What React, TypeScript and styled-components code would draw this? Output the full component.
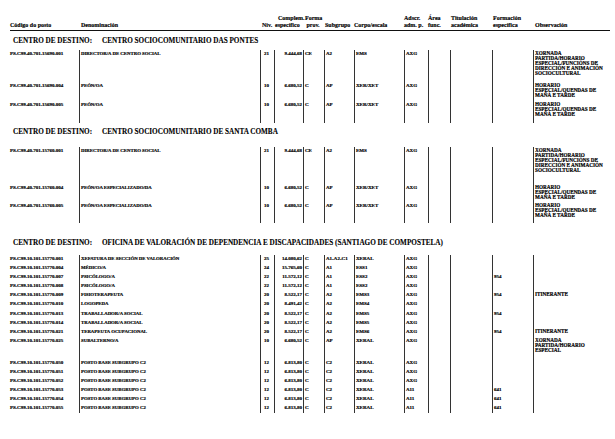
import React from 'react';
import styled, { createGlobalStyle } from 'styled-components';

const Global = createGlobalStyle`
  html, body { margin: 0; padding: 0; background: #ffffff; }
  body {
    width: 615px;
    height: 439px;
    overflow: hidden;
    font-family: "Liberation Serif", "Times New Roman", serif;
    color: #000;
  }
`;

const COLS = '69px 181px 14px 29px 21px 30px 50px 24px 22px 42px 41px 77px';

const Page = styled.div`
  padding: 15px 5px 0 10px;
  width: 600px;
`;

const HeaderRow = styled.div`
  display: grid;
  grid-template-columns: ${COLS};
  align-items: end;
  border-bottom: 1px solid #111;
  padding-bottom: 1px;
  font-size: 6px;
  line-height: 7px;
  font-weight: bold;
  -webkit-text-stroke: 0.15px #000;
`;

const HeadCell = styled.div<{ $pad?: number }>`
  white-space: pre;
  padding-left: ${(p) => p.$pad ?? 1}px;
`;

const Section = styled.section<{ $top: number }>`
  margin-top: ${(p) => p.$top}px;
`;

const Title = styled.h2<{ $gap: number }>`
  margin: 0 0 ${(p) => p.$gap}px 0;
  padding-left: 3px;
  display: flex;
  font-size: 7.2px;
  line-height: 10px;
  height: 10px;
  font-weight: bold;
  white-space: nowrap;
  -webkit-text-stroke: 0.1px #000;
`;

const TitleLabel = styled.span`
  width: 89px;
  flex: none;
`;

const Row = styled.div<{ $h: number }>`
  display: grid;
  grid-template-columns: ${COLS};
  height: ${(p) => p.$h}px;
  font-weight: bold;
  font-size: 5px;
  line-height: 5px;
  -webkit-text-stroke: 0.18px #000;
`;

const Cell = styled.div<{ $line?: boolean; $right?: boolean; $pad?: number }>`
  border-left: ${(p) => (p.$line ? '1px solid #333' : 'none')};
  padding-top: 1px;
  padding-left: ${(p) => p.$pad ?? 1}px;
  padding-right: ${(p) => (p.$right ? 1 : 0)}px;
  text-align: ${(p) => (p.$right ? 'right' : 'left')};
  white-space: pre;
  overflow: visible;
`;

const CodeCell = styled(Cell)`
  padding-left: 0;
`;

const DenCell = styled(Cell)`
  font-size: 4.8px;
`;

const ObsCell = styled(Cell)`
  font-size: 5.2px;
  line-height: 5px;
`;

type RowData = {
  code: string;
  den: string;
  niv: string;
  comp: string;
  forma: string;
  sub: string;
  corpo: string;
  adscr: string;
  form?: string;
  obs?: string;
  h: number;
};

type SectionData = { name: string; top: number; gap: number; rows: RowData[] };

const OBS_DIR = 'XORNADA\nPARTIDA/HORARIO\nESPECIAL/FUNCIÓNS DE\nDIRECCIÓN E ANIMACIÓN\nSOCIOCULTURAL';
const OBS_PEON = 'HORARIO\nESPECIAL/QUENDAS DE\nMAÑÁ E TARDE';

const base = (
  code: string,
  den: string,
  niv: string,
  comp: string,
  sub: string,
  corpo: string,
  h: number,
  extra: Partial<RowData> = {}
): RowData => ({ code, den, niv, comp, forma: 'C', sub, corpo, adscr: 'AXG', h, ...extra });

const P = 9.1;

const sections: SectionData[] = [
  {
    name: 'CENTRO SOCIOCOMUNITARIO DAS PONTES',
    top: 5,
    gap: 4,
    rows: [
      base('PS.C99.40.701.15690.001', 'DIRECTOR/A DE CENTRO SOCIAL', '21', '9.444,68', 'A2', 'EMS', 32, { forma: 'CE', obs: OBS_DIR }),
      base('PS.C99.40.701.15690.004', 'PEÓN/OA', '10', '6.680,52', 'AP', 'XER/XET', 18.5, { obs: OBS_PEON }),
      base('PS.C99.40.701.15690.005', 'PEÓN/OA', '10', '6.680,52', 'AP', 'XER/XET', 22, { obs: OBS_PEON }),
    ],
  },
  {
    name: 'CENTRO SOCIOCOMUNITARIO DE SANTA COMBA',
    top: 4,
    gap: 10,
    rows: [
      base('PS.C99.40.701.15760.001', 'DIRECTOR/A DE CENTRO SOCIAL', '21', '9.444,68', 'A2', 'EMS', 37, { forma: 'CE', obs: OBS_DIR }),
      base('PS.C99.40.701.15760.004', 'PEÓN/OA ESPECIALIZADO/DA', '10', '6.680,52', 'AP', 'XER/XET', 18.5, { obs: OBS_PEON }),
      base('PS.C99.40.701.15760.005', 'PEÓN/OA ESPECIALIZADO/DA', '10', '6.680,52', 'AP', 'XER/XET', 21, { obs: OBS_PEON }),
    ],
  },
  {
    name: 'OFICINA DE VALORACIÓN DE DEPENDENCIA E DISCAPACIDADES (SANTIAGO DE COMPOSTELA)',
    top: 15,
    gap: 7,
    rows: [
      base('PS.C99.10.101.15770.001', 'XEFATURA DE SECCIÓN DE VALORACIÓN', '25', '14.080,62', 'A1-A2-C1', 'XERAL', P),
      base('PS.C99.10.101.15770.004', 'MÉDICO/A', '24', '15.765,60', 'A1', 'ESS1', P),
      base('PS.C99.10.101.15770.007', 'PSICÓLOGO/A', '22', '11.572,12', 'A1', 'ESS2', P, { form: '954' }),
      base('PS.C99.10.101.15770.008', 'PSICÓLOGO/A', '22', '11.572,12', 'A1', 'ESS2', P),
      base('PS.C99.10.101.15770.009', 'FISIOTERAPEUTA', '20', '8.522,17', 'A2', 'EMS3', P, { form: '954', obs: 'ITINERANTE' }),
      base('PS.C99.10.101.15770.010', 'LOGOPEDA', '20', '8.491,42', 'A2', 'EMS4', P),
      base('PS.C99.10.101.15770.013', 'TRABALLADOR/A SOCIAL', '20', '8.522,17', 'A2', 'EMS5', P, { form: '954' }),
      base('PS.C99.10.101.15770.014', 'TRABALLADOR/A SOCIAL', '20', '8.522,17', 'A2', 'EMS5', P),
      base('PS.C99.10.101.15770.021', 'TERAPEUTA OCUPACIONAL', '20', '8.522,17', 'A2', 'EMS6', P, { form: '954', obs: 'ITINERANTE' }),
      base('PS.C99.10.101.15770.025', 'SUBALTERNO/A', '10', '6.680,52', 'AP', 'XERAL', 22, { obs: 'XORNADA\nPARTIDA/HORARIO\nESPECIAL' }),
      base('PS.C99.10.101.15770.050', 'POSTO BASE SUBGRUPO C2', '12', '6.813,80', 'C2', 'XERAL', P),
      base('PS.C99.10.101.15770.051', 'POSTO BASE SUBGRUPO C2', '12', '6.813,80', 'C2', 'XERAL', P),
      base('PS.C99.10.101.15770.052', 'POSTO BASE SUBGRUPO C2', '12', '6.813,80', 'C2', 'XERAL', P),
      base('PS.C99.10.101.15770.053', 'POSTO BASE SUBGRUPO C2', '12', '6.813,80', 'C2', 'XERAL', P, { adscr: 'A11', form: '641' }),
      base('PS.C99.10.101.15770.054', 'POSTO BASE SUBGRUPO C2', '12', '6.813,80', 'C2', 'XERAL', P, { adscr: 'A11', form: '641' }),
      base('PS.C99.10.101.15770.055', 'POSTO BASE SUBGRUPO C2', '12', '6.813,80', 'C2', 'XERAL', P, { adscr: 'A11', form: '641' }),
    ],
  },
];

function DataRow({ r }: { r: RowData }) {
  return (
    <Row $h={r.h}>
      <CodeCell>{r.code}</CodeCell>
      <DenCell $line $pad={1}>{r.den}</DenCell>
      <Cell $line $pad={3}>{r.niv}</Cell>
      <Cell $line $right>{r.comp}</Cell>
      <Cell $line>{r.forma}</Cell>
      <Cell $line>{r.sub}</Cell>
      <Cell $line>{r.corpo}</Cell>
      <Cell $line>{r.adscr}</Cell>
      <Cell $line />
      <Cell $line />
      <Cell $line>{r.form ?? ''}</Cell>
      <ObsCell $line>{r.obs ?? ''}</ObsCell>
    </Row>
  );
}

export default function App() {
  return (
    <>
      <Global />
      <Page>
        <HeaderRow>
          <HeadCell $pad={0}>Código do posto</HeadCell>
          <HeadCell $pad={2}>Denominación</HeadCell>
          <HeadCell $pad={2}>Nív.</HeadCell>
          <HeadCell $pad={1}>{'  Complem.\nespecífico'}</HeadCell>
          <HeadCell $pad={2}>{'Forma\n prov.'}</HeadCell>
          <HeadCell $pad={1}>Subgrupo</HeadCell>
          <HeadCell $pad={0}>Corpo/escala</HeadCell>
          <HeadCell $pad={0}>{'Adscr.\nadm. p.'}</HeadCell>
          <HeadCell $pad={0}>{'Área\nfunc.'}</HeadCell>
          <HeadCell $pad={1}>{'Titulación\nacadémica'}</HeadCell>
          <HeadCell $pad={1}>{'Formación\nespecífica'}</HeadCell>
          <HeadCell $pad={2}>Observación</HeadCell>
        </HeaderRow>
        {sections.map((s) => (
          <Section key={s.name} $top={s.top}>
            <Title $gap={s.gap}>
              <TitleLabel>CENTRO DE DESTINO:</TitleLabel>
              <span>{s.name}</span>
            </Title>
            {s.rows.map((r) => (
              <DataRow key={r.code} r={r} />
            ))}
          </Section>
        ))}
      </Page>
    </>
  );
}
